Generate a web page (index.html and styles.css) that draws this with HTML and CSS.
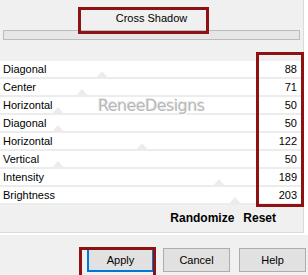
FILE: index.html
```html
<!DOCTYPE html>
<html lang="en">
<head>
    <meta charset="UTF-8">
    <title>Cross Shadow</title>
    <link rel="stylesheet" href="styles.css">
</head>
<body>

<div class="frame">
    <div class="panel">
        <div class="title">Cross Shadow</div>
        <div class="bar"></div>

        <div class="rows">
            <div class="row"><span>Diagonal</span><span class="val">88</span><i class="thumb" style="left: 102px"></i></div>
            <div class="row"><span>Center</span><span class="val">71</span><i class="thumb" style="left: 82px"></i></div>
            <div class="row"><span>Horizontal</span><span class="val">50</span><i class="thumb" style="left: 58px"></i></div>
            <div class="row"><span>Diagonal</span><span class="val">50</span><i class="thumb" style="left: 58px"></i></div>
            <div class="row"><span>Horizontal</span><span class="val">122</span><i class="thumb" style="left: 142px"></i></div>
            <div class="row"><span>Vertical</span><span class="val">50</span><i class="thumb" style="left: 58px"></i></div>
            <div class="row"><span>Intensity</span><span class="val">189</span><i class="thumb" style="left: 219px"></i></div>
            <div class="row"><span>Brightness</span><span class="val">203</span><i class="thumb" style="left: 235px"></i></div>
        </div>

        <div class="tools">
            <span>Randomize</span>
            <span>Reset</span>
        </div>
    </div>
</div>

<div class="buttons">
    <button class="btn default">Apply</button>
    <button class="btn">Cancel</button>
    <button class="btn">Help</button>
</div>

<!-- annotation frames and watermark -->
<div class="mark mark-title"></div>
<div class="mark mark-values"></div>
<div class="mark mark-apply"></div>
<div class="watermark">ReneeDesigns</div>

</body>
</html>
```

FILE: styles.css
```css
body {
    margin: 0;
    background: #f0f0f0;
    font-family: "Liberation Sans", Arial, sans-serif;
    font-size: 11px;
    color: #000;
    width: 308px;
    height: 275px;
    overflow: hidden;
    position: relative;
}
.frame {
    background: #fff;
    padding-right: 4px;
    padding-bottom: 2px;
}
.panel {
    background: #f0f0f0;
    border-right: 1px solid #dadada;
    border-bottom: 1px solid #dadada;
}
.title {
    height: 30px;
    line-height: 36px;
    text-align: center;
    font-size: 11px;
}
.bar {
    height: 8px;
    margin: 0 3px;
    background: #e6e6e6;
    border: 1px solid #bcbcbc;
}
.rows {
    margin-top: 21px;
}
.row {
    position: relative;
    display: flex;
    justify-content: space-between;
    align-items: center;
    height: 16px;
    padding: 0 6px 0 3px;
    background: #fff;
    border-bottom: 2px solid #ececec;
}
.row span {
    position: relative;
    z-index: 1;
}
.thumb {
    position: absolute;
    bottom: -2px;
    margin-left: -7px;
    width: 0;
    height: 0;
    border-left: 7px solid transparent;
    border-right: 7px solid transparent;
    border-bottom: 8px solid #ececec;
}
.tools {
    display: flex;
    justify-content: flex-end;
    gap: 9px;
    height: 27px;
    line-height: 26px;
    padding-right: 27px;
    font-size: 12px;
    font-weight: bold;
}
.buttons {
    display: flex;
    justify-content: flex-end;
    gap: 9px;
    padding: 13px 2px 0 0;
}
.btn {
    width: 67px;
    height: 24px;
    padding: 0;
    background: #e1e1e1;
    border: 1px solid #adadad;
    font-family: "Liberation Sans", Arial, sans-serif;
    font-size: 11px;
    color: #000;
}
.btn.default {
    border: 2px solid #0078d7;
}
.mark {
    position: absolute;
    border: 3px solid #8e1212;
}
.mark-title {
    left: 78px;
    top: 7px;
    width: 125px;
    height: 21px;
}
.mark-values {
    left: 256px;
    top: 52px;
    width: 42px;
    height: 149px;
}
.mark-apply {
    left: 79px;
    top: 247px;
    width: 71px;
    height: 25px;
}
.watermark {
    position: absolute;
    left: 98px;
    top: 96px;
    font-family: "DejaVu Sans", sans-serif;
    font-size: 16px;
    color: #b8b8b8;
    text-shadow: 1px 1px 0 #fff, -1px -1px 0 #e8e8e8;
    letter-spacing: -0.6px;
}
```
